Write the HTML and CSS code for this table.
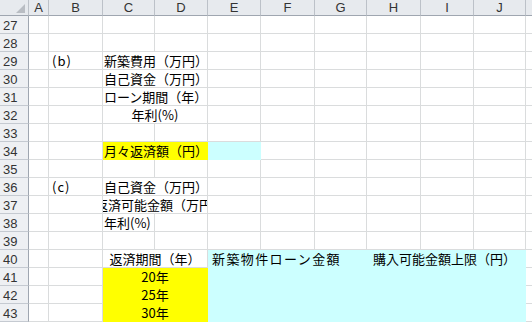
FILE: index.html
```html
<!DOCTYPE html>
<html lang="ja">
<head>
  <meta charset="UTF-8">
  <title>Sheet1</title>
  <link rel="stylesheet" href="styles.css">
</head>
<body>
  <table class="sheet">
    <colgroup>
      <col class="w-rh">
      <col class="w-a">
      <col class="w-b">
      <col class="w-c">
      <col class="w-d">
      <col class="w-e">
      <col class="w-f">
      <col class="w-g">
      <col class="w-h">
      <col class="w-i">
      <col class="w-j">
      <col class="w-k">
    </colgroup>
    <thead>
      <tr class="hd">
        <th class="corner"><svg width="9" height="9" viewBox="0 0 9 9"><polygon points="9,0 9,9 0,9" fill="#b9bdc3"/></svg></th>
        <th>A</th><th>B</th><th>C</th><th>D</th><th>E</th>
        <th>F</th><th>G</th><th>H</th><th>I</th><th>J</th><th></th>
      </tr>
    </thead>
    <tbody>
      <tr><td class="rh">27</td><td></td><td></td><td></td><td></td><td></td><td></td><td></td><td></td><td></td><td></td><td></td></tr>
      <tr><td class="rh">28</td><td></td><td></td><td></td><td></td><td></td><td></td><td></td><td></td><td></td><td></td><td></td></tr>
      <tr><td class="rh">29</td><td></td><td class="lbl">(b)</td><td colspan="2" class="txt">新築費用（万円）</td><td></td><td></td><td></td><td></td><td></td><td></td><td></td></tr>
      <tr><td class="rh">30</td><td></td><td></td><td colspan="2" class="txt">自己資金（万円）</td><td></td><td></td><td></td><td></td><td></td><td></td><td></td></tr>
      <tr><td class="rh">31</td><td></td><td></td><td colspan="2" class="txt">ローン期間（年）</td><td></td><td></td><td></td><td></td><td></td><td></td><td></td></tr>
      <tr><td class="rh">32</td><td></td><td></td><td colspan="2" class="mid">年利(%)</td><td></td><td></td><td></td><td></td><td></td><td></td><td></td></tr>
      <tr><td class="rh">33</td><td></td><td></td><td></td><td></td><td></td><td></td><td></td><td></td><td></td><td></td><td></td></tr>
      <tr><td class="rh">34</td><td></td><td></td><td colspan="2" class="txt yellow">月々返済額（円）</td><td class="cyan"></td><td></td><td></td><td></td><td></td><td></td><td></td></tr>
      <tr><td class="rh">35</td><td></td><td></td><td></td><td></td><td></td><td></td><td></td><td></td><td></td><td></td><td></td></tr>
      <tr><td class="rh">36</td><td></td><td class="lbl">(c)</td><td colspan="2" class="txt">自己資金（万円）</td><td></td><td></td><td></td><td></td><td></td><td></td><td></td></tr>
      <tr><td class="rh">37</td><td></td><td></td><td colspan="2" class="txt spill">返済可能金額（万円）</td><td></td><td></td><td></td><td></td><td></td><td></td><td></td></tr>
      <tr><td class="rh">38</td><td></td><td></td><td class="txt">年利(%)</td><td></td><td></td><td></td><td></td><td></td><td></td><td></td><td></td></tr>
      <tr><td class="rh">39</td><td></td><td></td><td></td><td></td><td></td><td></td><td></td><td></td><td></td><td></td><td></td></tr>
      <tr><td class="rh">40</td><td></td><td></td><td colspan="2" class="mid">返済期間（年）</td><td colspan="3" class="cyan loan">新築物件ローン金額</td><td colspan="3" class="cyan limit">購入可能金額上限（円）</td><td></td></tr>
      <tr><td class="rh">41</td><td></td><td></td><td colspan="2" class="mid yellow">20年</td><td colspan="6" class="cyan"></td><td></td></tr>
      <tr><td class="rh">42</td><td></td><td></td><td colspan="2" class="mid yellow">25年</td><td colspan="6" class="cyan"></td><td></td></tr>
      <tr><td class="rh">43</td><td></td><td></td><td colspan="2" class="mid yellow">30年</td><td colspan="6" class="cyan"></td><td></td></tr>
    </tbody>
  </table>
</body>
</html>
```

FILE: styles.css
```css
* {
  box-sizing: border-box;
}
html, body {
  margin: 0;
  background: #fff;
  overflow: hidden;
}
.sheet {
  border-collapse: separate;
  border-spacing: 0;
  table-layout: fixed;
  width: 566px;
  font: 13px "Noto Sans CJK JP", sans-serif;
  color: #000;
}
.w-rh { width: 29px; }
.w-a { width: 20px; }
.w-b { width: 54px; }
.w-c { width: 52px; }
.w-d { width: 53px; }
.w-e { width: 53px; }
.w-f { width: 54px; }
.w-g { width: 52px; }
.w-h { width: 54px; }
.w-i { width: 53px; }
.w-j { width: 52px; }
.w-k { width: 40px; }

.sheet tr {
  height: 18px;
}
.sheet td,
.sheet th {
  padding: 0;
  border-right: 1px solid #dadcdd;
  border-bottom: 1px solid #dadcdd;
  white-space: nowrap;
  overflow: hidden;
  font-weight: normal;
  text-align: left;
  line-height: 17px;
}

/* column letters */
.sheet .hd {
  height: 16px;
}
.sheet thead th {
  background: #e7eaee;
  border-right-color: #bcc1c8;
  border-bottom-color: #9fa6b0;
  text-align: center;
  font-family: "Liberation Sans", sans-serif;
  color: #333;
  line-height: 15px;
}
.sheet th.corner {
  text-align: right;
  padding-right: 3px;
  line-height: 0;
  vertical-align: bottom;
  padding-bottom: 2px;
}

/* row numbers */
.sheet td.rh {
  background: #eef0f3;
  border-right-color: #9fa6b0;
  border-bottom-color: #c5cad1;
  font-family: "Liberation Sans", sans-serif;
  color: #333;
  padding: 2px 0 0 3px;
  line-height: 15px;
}

.lbl {
  padding-left: 3px !important;
  letter-spacing: 1px;
}
.txt {
  padding-left: 1px !important;
}
.mid {
  text-align: center !important;
}
/* long label clipped on both sides like a centred overflow */
.spill {
  text-indent: -9px;
}

.yellow {
  background: #ffff00;
  border-bottom-color: #ffff00 !important;
  border-right-color: #ffff00 !important;
}
.cyan {
  background: #ccffff;
  border-bottom-color: #ccffff !important;
  border-right-color: #ccffff !important;
}
.loan {
  padding-left: 4px !important;
  letter-spacing: 1.4px;
}
.limit {
  padding-left: 6px !important;
}
```
